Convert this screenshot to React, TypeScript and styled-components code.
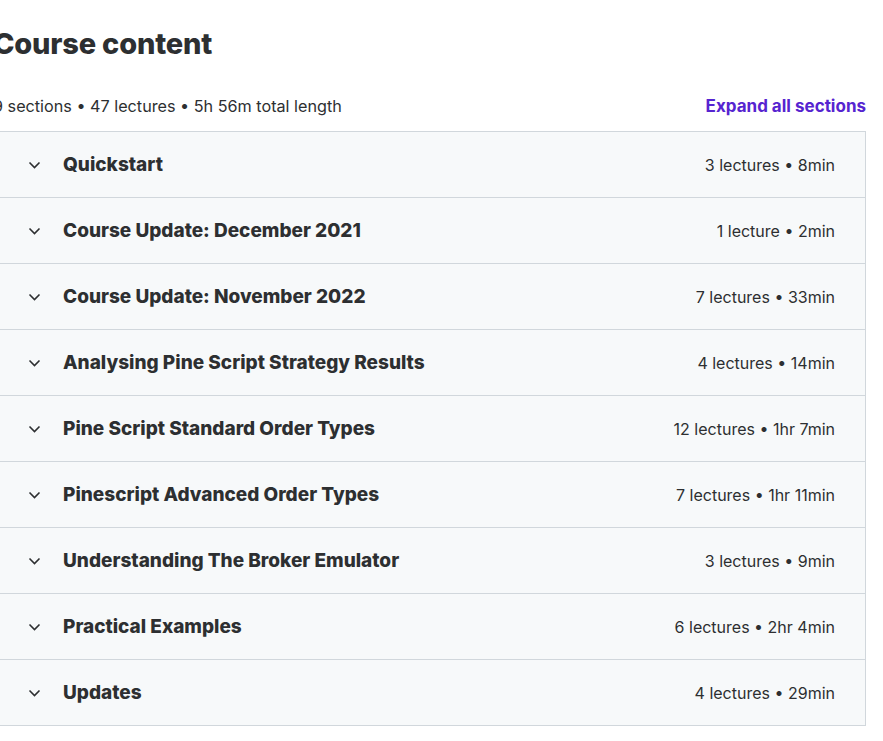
import styled, { createGlobalStyle } from 'styled-components';

const GlobalStyle = createGlobalStyle`
  body {
    margin: 0;
    background: #ffffff;
    font-family: Inter, "Noto Sans", sans-serif;
    color: #2d2f31;
  }
`;

const Wrapper = styled.div`
  width: 873px;
  margin-left: -7px;
  padding-top: 27px;
`;

const Title = styled.h2`
  margin: 0 0 32px;
  font-size: 29px;
  font-weight: 800;
  line-height: 1.2;
  color: #2d2f31;
  letter-spacing: -0.2px;
`;

const SummaryBar = styled.div`
  display: flex;
  justify-content: space-between;
  align-items: center;
  height: 24px;
  margin-bottom: 13px;
  font-size: 16.2px;
`;

const ExpandButton = styled.button`
  border: none;
  background: none;
  padding: 0;
  font-family: inherit;
  font-size: 17px;
  font-weight: 700;
  color: #5624d0;
  cursor: pointer;
`;

const Accordion = styled.div`
  width: 100%;
  border: 1px solid #d1d7dc;
  border-bottom: none;
  box-sizing: border-box;
`;

const SectionRow = styled.div`
  display: flex;
  align-items: center;
  height: 66px;
  box-sizing: border-box;
  padding: 1px 30px 0 34px;
  background: #f7f9fa;
  border-bottom: 1px solid #d1d7dc;
`;

const Chevron = styled.span`
  display: flex;
  width: 13px;
  margin-right: 22px;
  color: #2d2f31;
`;

const SectionTitle = styled.span`
  flex: 1;
  font-size: 19px;
  font-weight: 800;
`;

const SectionMeta = styled.span`
  font-size: 16px;
  color: #2d2f31;
`;

const sections = [
  { title: 'Quickstart', meta: '3 lectures • 8min' },
  { title: 'Course Update: December 2021', meta: '1 lecture • 2min' },
  { title: 'Course Update: November 2022', meta: '7 lectures • 33min' },
  { title: 'Analysing Pine Script Strategy Results', meta: '4 lectures • 14min' },
  { title: 'Pine Script Standard Order Types', meta: '12 lectures • 1hr 7min' },
  { title: 'Pinescript Advanced Order Types', meta: '7 lectures • 1hr 11min' },
  { title: 'Understanding The Broker Emulator', meta: '3 lectures • 9min' },
  { title: 'Practical Examples', meta: '6 lectures • 2hr 4min' },
  { title: 'Updates', meta: '4 lectures • 29min' },
];

const ChevronIcon = () => (
  <svg width="13" height="8" viewBox="0 0 13 8" fill="none">
    <path d="M1.5 1.5L6.5 6.5L11.5 1.5" stroke="currentColor" strokeWidth="1.6" />
  </svg>
);

const App = () => {
  return (
    <Wrapper>
      <GlobalStyle />
      <Title>Course content</Title>
      <SummaryBar>
        <span>9 sections • 47 lectures • 5h 56m total length</span>
        <ExpandButton>Expand all sections</ExpandButton>
      </SummaryBar>
      <Accordion>
        {sections.map((s) => (
          <SectionRow key={s.title}>
            <Chevron>
              <ChevronIcon />
            </Chevron>
            <SectionTitle>{s.title}</SectionTitle>
            <SectionMeta>{s.meta}</SectionMeta>
          </SectionRow>
        ))}
      </Accordion>
    </Wrapper>
  );
};

export default App;
